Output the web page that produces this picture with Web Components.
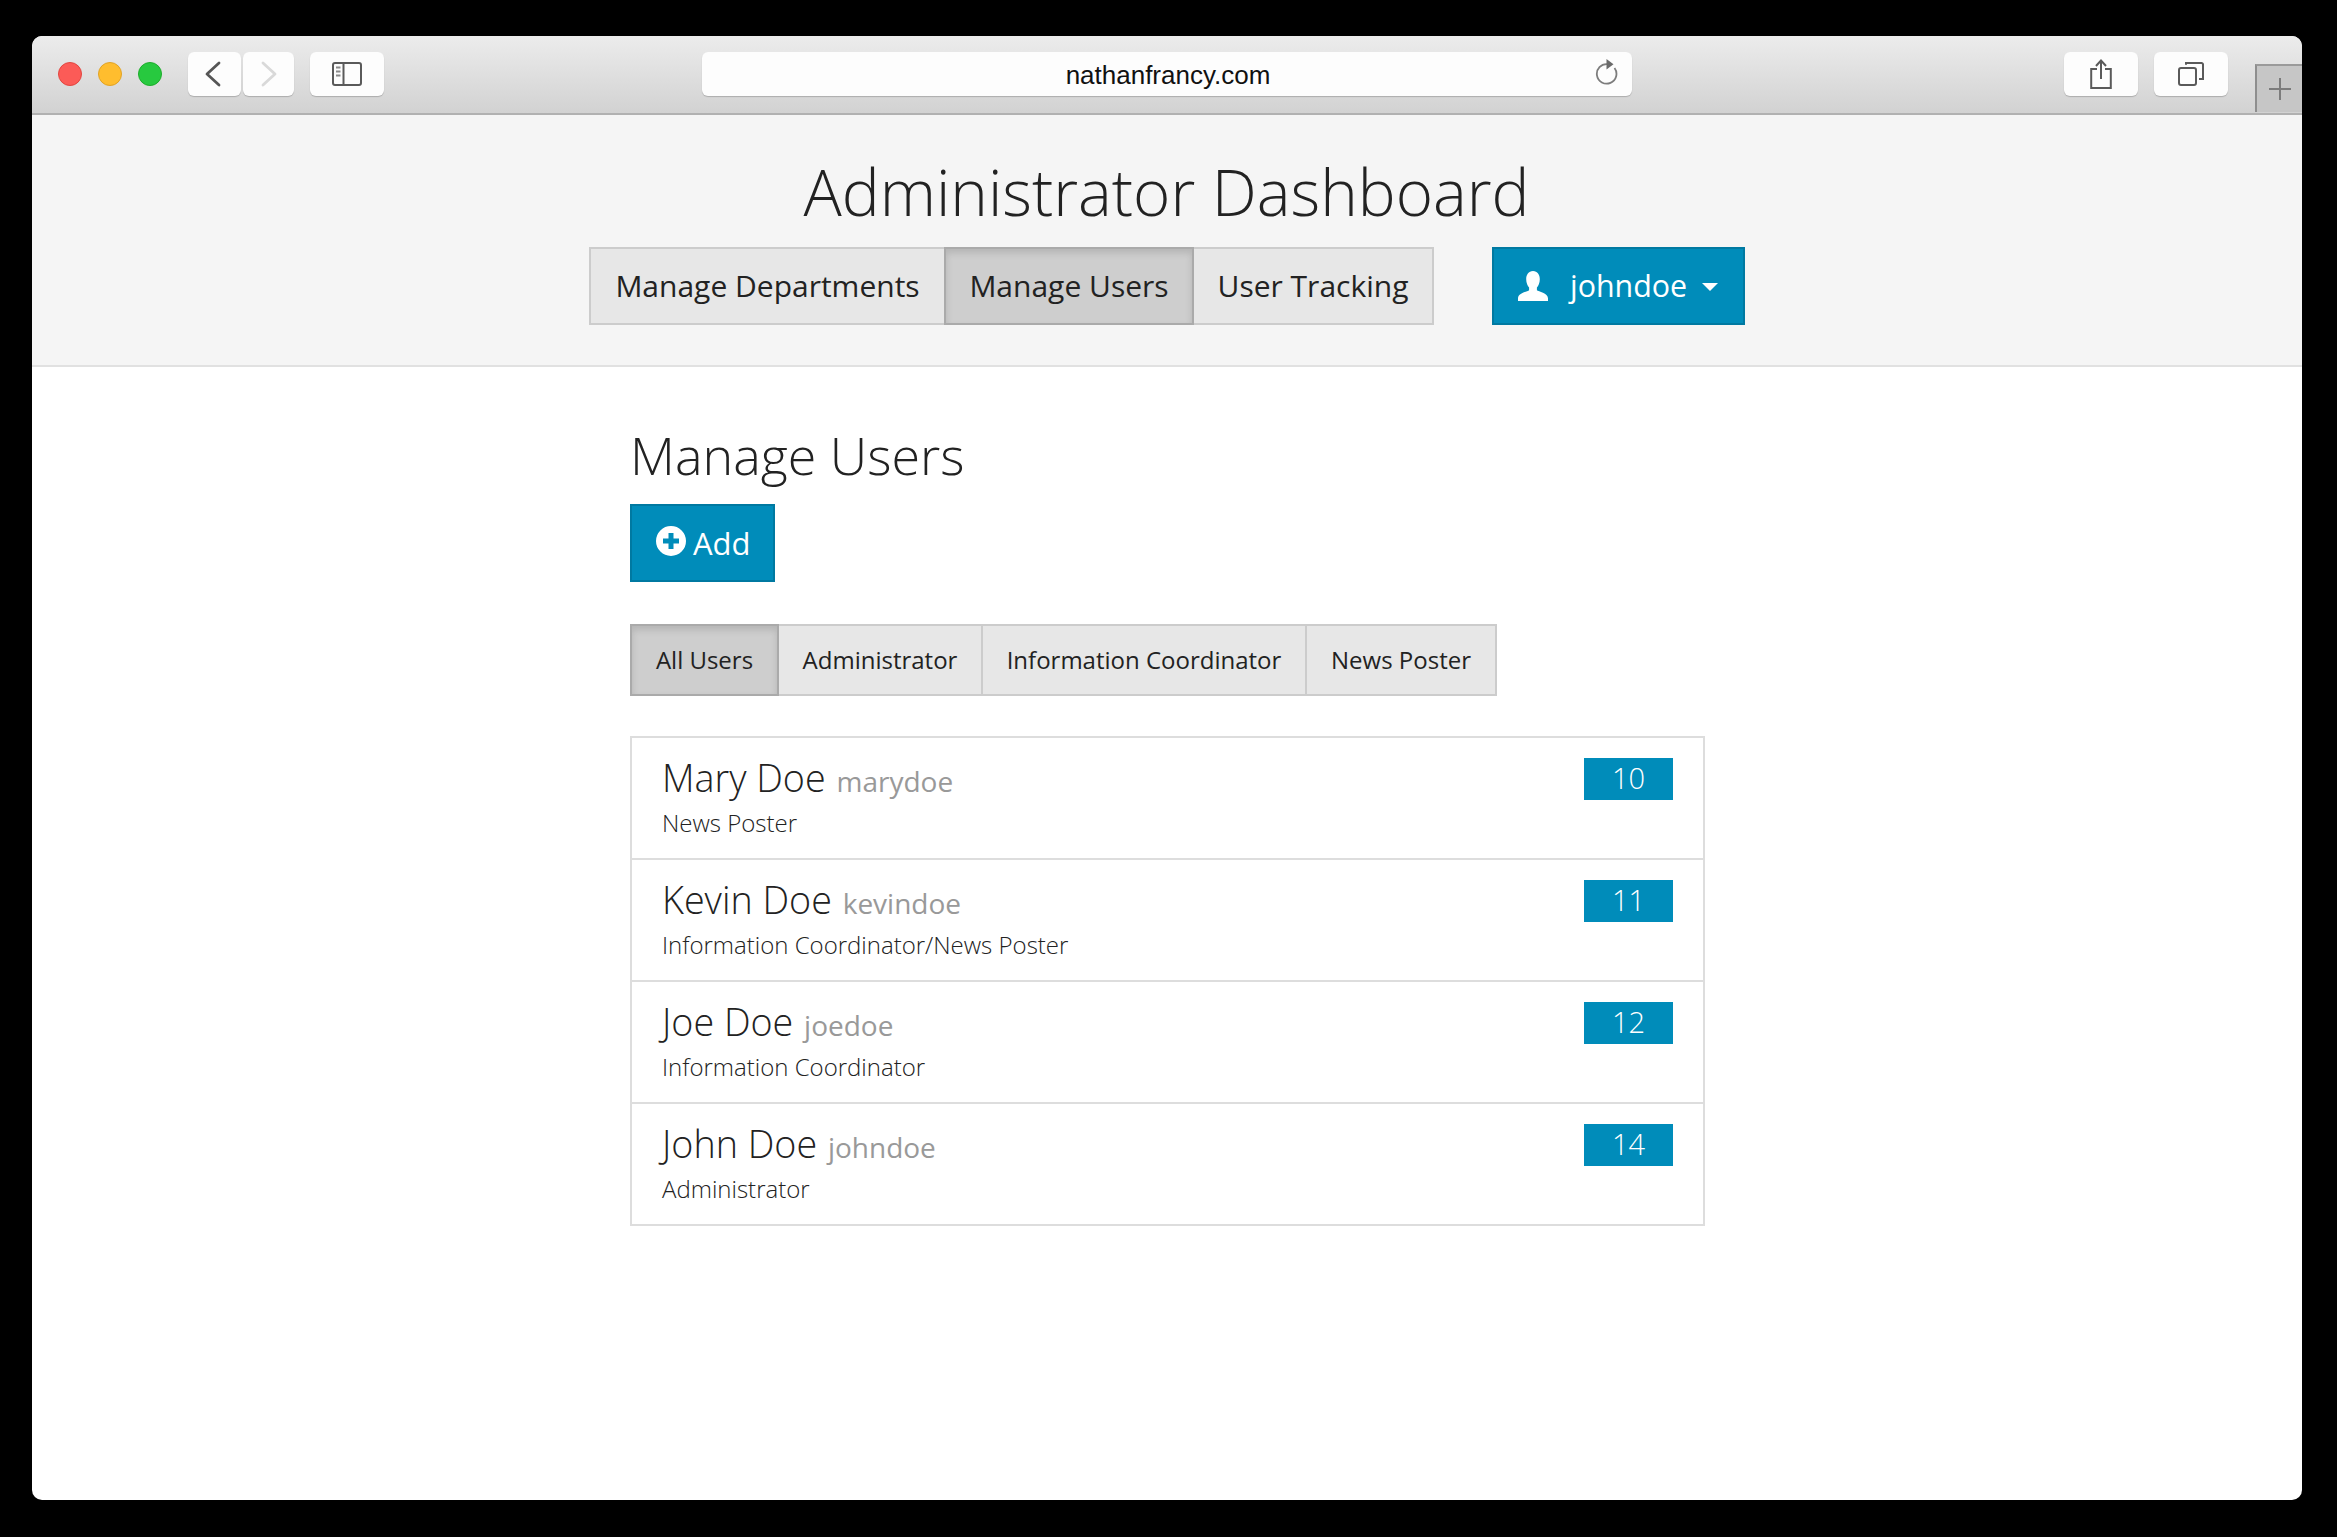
<!DOCTYPE html>
<html>
<head>
<meta charset="utf-8">
<title>Administrator Dashboard</title>
<style>
  html, body { margin: 0; height: 100%; background: #000; }
  body { font-family: "Open Sans", "Liberation Sans", sans-serif; color: #222; }
</style>
</head>
<body>
<browser-window url="nathanfrancy.com">
  <dash-header title="Administrator Dashboard" user="johndoe">
    <seg-button size="lg" style="width:357px">Manage Departments</seg-button>
    <seg-button size="lg" active style="width:250px">Manage Users</seg-button>
    <seg-button size="lg" style="width:242px">User Tracking</seg-button>
  </dash-header>
  <users-panel heading="Manage Users">
    <seg-button slot="filters" size="md" active style="width:149px">All Users</seg-button>
    <seg-button slot="filters" size="md" style="width:206px">Administrator</seg-button>
    <seg-button slot="filters" size="md" style="width:326px">Information Coordinator</seg-button>
    <seg-button slot="filters" size="md" style="width:192px">News Poster</seg-button>
    <user-row name="Mary Doe" username="marydoe" role="News Poster" count="10"></user-row>
    <user-row name="Kevin Doe" username="kevindoe" role="Information Coordinator/News Poster" count="11"></user-row>
    <user-row name="Joe Doe" username="joedoe" role="Information Coordinator" count="12"></user-row>
    <user-row name="John Doe" username="johndoe" role="Administrator" count="14"></user-row>
  </users-panel>
</browser-window>

<script>
class ToolButton extends HTMLElement {
  constructor() {
    super();
    this.attachShadow({ mode: 'open' }).innerHTML = `
      <style>
        :host {
          display: flex; align-items: center; justify-content: center;
          height: 44px; background: #fdfdfd; border-radius: 6px;
          box-shadow: 0 1px 1px rgba(0,0,0,0.2);
        }
      </style>
      <slot></slot>`;
  }
}
customElements.define('tool-button', ToolButton);

class BrowserToolbar extends HTMLElement {
  constructor() {
    super();
    this.attachShadow({ mode: 'open' }).innerHTML = `
      <style>
        :host {
          display: flex; align-items: flex-start; box-sizing: border-box;
          height: 79px; padding: 16px 0 0 26px;
          background: linear-gradient(#ececec, #d2d2d2);
          border-bottom: 2px solid #b1b1b1;
        }
        .lights { display: flex; gap: 16px; margin: 10px 26px 0 0; }
        .lights i { width: 22px; height: 22px; border-radius: 50%; border: 1px solid; display: block; }
        .red { background: #fc5b57; border-color: #e24640 !important; }
        .yellow { background: #ffbd2e; border-color: #e1a325 !important; }
        .green { background: #27c93f; border-color: #1dad2b !important; }
        .url {
          width: 930px; height: 44px; margin-left: 318px; box-sizing: border-box;
          display: flex; align-items: center; background: #fdfdfd; border-radius: 6px;
          box-shadow: 0 1px 1px rgba(0,0,0,0.2); padding: 0 14px 0 0;
          font: 26px "Liberation Sans", sans-serif; color: #111;
        }
        .url span { flex: 1; text-align: center; padding: 2px 0 0 40px; }
        .url svg { margin-top: -4px; }
        .tab {
          width: 47px; height: 48px; margin: 12px 0 0 27px; box-sizing: border-box;
          background: #c6c6c6; border-top: 2px solid #9a9a9a; border-left: 2px solid #8e8e8e;
          display: flex; align-items: center; justify-content: center;
        }
        svg { display: block; }
      </style>
      <div class="lights"><i class="red"></i><i class="yellow"></i><i class="green"></i></div>
      <tool-button style="width:53px">
        <svg style="margin-right:3px" width="16" height="26" viewBox="0 0 16 26"><path d="M14 2 2 13l12 11" fill="none" stroke="#565656" stroke-width="2.800" stroke-linecap="round" stroke-linejoin="round"/></svg>
      </tool-button>
      <tool-button style="width:51px;margin-left:2px">
        <svg width="16" height="26" viewBox="0 0 16 26"><path d="M2 2l12 11L2 24" fill="none" stroke="#d9d9d9" stroke-width="2.800" stroke-linecap="round" stroke-linejoin="round"/></svg>
      </tool-button>
      <tool-button style="width:74px;margin-left:16px">
        <svg width="30" height="24" viewBox="0 0 30 24"><rect x="1" y="1" width="28" height="22" rx="2" fill="none" stroke="#5a5a5a" stroke-width="2"/><path d="M11.500 1v22" stroke="#5a5a5a" stroke-width="2"/><path d="M4 5.500h4.500M4 9.500h4.500M4 13.500h4.500" stroke="#8a8a8a" stroke-width="2"/></svg>
      </tool-button>
      <div class="url"><span><slot></slot></span>
        <svg width="24" height="26" viewBox="0 0 24 26"><path d="M13.500 5.100A9.800 9.800 0 1 0 20.500 9" fill="none" stroke="#7d7d7d" stroke-width="1.800"/><path d="M12.500 0l7 5.200-7 5.200z" fill="#6a6a6a"/></svg>
      </div>
      <tool-button style="width:74px;margin-left:432px">
        <svg width="22" height="30" viewBox="0 0 22 30"><path d="M7 10H1.200v19h19.600V10H15" fill="none" stroke="#5a5a5a" stroke-width="2"/><path d="M11 20V2M6 7l5-5.500L16 7" fill="none" stroke="#5a5a5a" stroke-width="2"/></svg>
      </tool-button>
      <tool-button style="width:74px;margin-left:16px">
        <svg width="26" height="24" viewBox="0 0 26 24"><rect x="1" y="6" width="17" height="17" rx="2" fill="none" stroke="#5a5a5a" stroke-width="2"/><path d="M8 2.800V1h15.500a1.500 1.500 0 0 1 1.500 1.500V17h-4" fill="none" stroke="#5a5a5a" stroke-width="2"/></svg>
      </tool-button>
      <div class="tab">
        <svg width="22" height="22" viewBox="0 0 22 22"><path d="M11 0v22M0 11h22" stroke="#7c7c7c" stroke-width="2"/></svg>
      </div>`;
  }
}
customElements.define('browser-toolbar', BrowserToolbar);

class BrowserWindow extends HTMLElement {
  constructor() {
    super();
    const url = this.getAttribute('url');
    this.attachShadow({ mode: 'open' }).innerHTML = `
      <style>
        :host { display: block; box-sizing: border-box; height: 1537px; padding: 36px 35px 37px 32px; }
        .win { height: 100%; background: #fff; border-radius: 10px; overflow: hidden; }
      </style>
      <div class="win">
        <browser-toolbar>${url}</browser-toolbar>
        <slot></slot>
      </div>`;
  }
}
customElements.define('browser-window', BrowserWindow);

class SegButton extends HTMLElement {
  constructor() {
    super();
    this.attachShadow({ mode: 'open' }).innerHTML = `
      <style>
        :host {
          display: flex; align-items: center; justify-content: center; box-sizing: border-box;
          background: #e7e7e7; border: 2px solid #ccc; margin-left: -2px; color: #222;
          font-weight: 400; white-space: nowrap;
        }
        :host(:first-child) { margin-left: 0; }
        :host([size="lg"]) { height: 78px; font-size: 30px; padding-bottom: 2px; }
        :host([size="md"]) { height: 72px; font-size: 24px; padding-bottom: 2px; }
        :host([active]) {
          background: #cecece; border-color: #aaa; position: relative;
          box-shadow: inset 0 4px 7px rgba(0,0,0,0.125);
        }
      </style>
      <slot></slot>`;
  }
}
customElements.define('seg-button', SegButton);

class DashHeader extends HTMLElement {
  constructor() {
    super();
    const title = this.getAttribute('title');
    const user = this.getAttribute('user');
    this.removeAttribute('title');
    this.attachShadow({ mode: 'open' }).innerHTML = `
      <style>
        :host {
          display: block; box-sizing: border-box; height: 252px; background: #f5f5f5;
          border-bottom: 2px solid #e1e1e1; padding-top: 31px;
        }
        h1 {
          margin: 0; text-align: center; font-weight: 300; font-size: 63.700px; line-height: 92px;
          color: #222; padding-right: 1px;
        }
        .bar { display: flex; justify-content: center; margin-top: 9px; }
        .nav { display: flex; }
        .user {
          display: flex; align-items: center; box-sizing: border-box; width: 253px; height: 78px;
          margin-left: 58px; padding: 0 0 1px 24px; background: #008cba; border: 2px solid #0079a1;
          color: #fff; font-size: 30.400px;
        }
        .user svg { display: block; }
        .name { margin-left: 22px; }
        .caret {
          margin: 3px 0 0 15px; width: 0; height: 0;
          border-left: 8px solid transparent; border-right: 8px solid transparent; border-top: 8px solid #fff;
        }
      </style>
      <h1>${title}</h1>
      <div class="bar">
        <div class="nav"><slot></slot></div>
        <div class="user">
          <svg width="30" height="30" viewBox="0 0 30 30"><path fill="#fff" d="M15 0c4.500 0 6.800 3.800 6.800 8.200 0 3.600-1.300 6.600-2.900 8.300v2.700c1.500 1.300 11.100 3 11.100 8V30H0v-2.800c0-5 9.600-6.700 11.100-8v-2.700c-1.600-1.700-2.900-4.700-2.900-8.300C8.200 3.800 10.500 0 15 0z"/></svg>
          <span class="name">${user}</span>
          <span class="caret"></span>
        </div>
      </div>`;
  }
}
customElements.define('dash-header', DashHeader);

class UserRow extends HTMLElement {
  constructor() {
    super();
    const a = n => this.getAttribute(n);
    this.attachShadow({ mode: 'open' }).innerHTML = `
      <style>
        :host {
          display: flex; justify-content: space-between; box-sizing: border-box; height: 122px;
          padding: 14px 30px 0 30px; border-bottom: 2px solid #ddd;
        }
        :host(:first-child) { height: 121px; }
        :host(:last-child) { border-bottom: 0; height: 120px; }
        .title { font-weight: 300; font-size: 37.700px; line-height: 52px; color: #222; white-space: nowrap; }
        small { font-weight: 400; font-size: 28px; color: #999; margin-left: 1px; }
        .role { font-weight: 300; font-size: 24px; line-height: 34px; color: #222; margin-top: -1px; }
        .badge {
          width: 89px; height: 42px; margin-top: 6px; background: #008cba; color: #fff;
          font-weight: 300; font-size: 29px; line-height: 40px; text-align: center;
        }
      </style>
      <div>
        <div class="title">${a('name')} <small>${a('username')}</small></div>
        <div class="role">${a('role')}</div>
      </div>
      <div class="badge">${a('count')}</div>`;
  }
}
customElements.define('user-row', UserRow);

class UsersPanel extends HTMLElement {
  constructor() {
    super();
    const heading = this.getAttribute('heading');
    this.attachShadow({ mode: 'open' }).innerHTML = `
      <style>
        :host { display: block; box-sizing: border-box; width: 1075px; margin: 0 auto 0 598px; padding-top: 54px; }
        h2 { margin: 0; font-weight: 300; font-size: 52px; line-height: 68px; color: #222; }
        .add {
          display: flex; align-items: center; box-sizing: border-box; width: 145px; height: 78px;
          margin-top: 15px; padding-left: 24px; background: #008cba; border: 2px solid #0079a1;
          color: #fff; font-size: 31px;
        }
        .add svg { display: block; margin-right: 7px; margin-top: -4px; }
        .filters { display: flex; margin-top: 42px; }
        .list { margin-top: 40px; border: 2px solid #ddd; }
      </style>
      <h2>${heading}</h2>
      <div class="add">
        <svg width="30" height="30" viewBox="0 0 30 30"><path fill="#fff" fill-rule="evenodd" d="M15 0a15 15 0 1 1 0 30a15 15 0 0 1 0-30zM12.500 7v5.500H7v5h5.500V23h5v-5.500H23v-5h-5.500V7z"/></svg>
        <span>Add</span>
      </div>
      <div class="filters"><slot name="filters"></slot></div>
      <div class="list"><slot></slot></div>`;
  }
}
customElements.define('users-panel', UsersPanel);
</script>
</body>
</html>
